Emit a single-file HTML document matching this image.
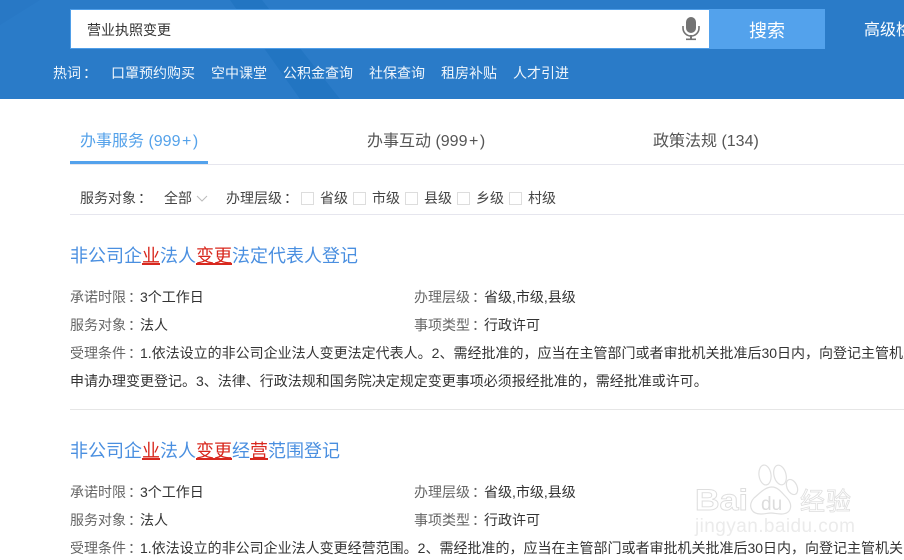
<!DOCTYPE html>
<html lang="zh"><head><meta charset="utf-8"><title>搜索</title>
<style>
html,body{margin:0;padding:0}
body{width:904px;height:560px;overflow:hidden;background:#fff;position:relative;font-family:"Liberation Sans","Noto Sans CJK SC",sans-serif;color:#333}
.t{position:absolute;white-space:nowrap;line-height:20px;font-size:14px}
.c{font-family:"Noto Sans CJK TC",sans-serif}
.k{font-family:"Noto Sans CJK TC",sans-serif;position:relative;left:2px}
.p{margin:0 1.500px}
.hd{position:absolute;left:0;top:0;width:904px;height:99px;background:#2a7bc8;overflow:hidden}
.ln{position:absolute;background:#e6e6ee;height:1px}
.w{color:#f0f6fc}
.h{font-size:18px;line-height:26px;color:#4a8fe0}
.h b{font-weight:400;color:#d8281e;position:relative;display:inline-block}
.h b::after{content:"";position:absolute;left:0;right:0;top:20px;height:2px;background:#d8281e}
.g{color:#666}
.cb{position:absolute;top:192px;width:11px;height:11px;border:1px solid #ddd;background:#fff}
.f{color:#444}
</style></head><body>
<div class="hd">
<svg width="904" height="99" style="position:absolute;left:0;top:0"><polygon points="230,0 262,0 340,99 300,99" fill="#2275c2"/><polygon points="0,0 40,0 0,25" fill="#2878c5"/></svg>
<div style="position:absolute;left:70px;top:9px;width:638px;height:38px;background:#fff;border:1px solid #4f9ee8"></div>
<div style="position:absolute;left:709px;top:9px;width:116px;height:40px;background:#53a2ec"></div>
<svg width="18" height="24" viewBox="0 0 18 24" style="position:absolute;left:682px;top:17px"><rect x="4" y="0" width="10" height="16" rx="5" fill="#737373"/><path d="M1 9v2a8 8 0 0 0 16 0V9" fill="none" stroke="#737373" stroke-width="1.6"/><rect x="8" y="18" width="2" height="4" fill="#737373"/><rect x="4" y="21.500" width="10" height="1.600" fill="#737373"/></svg>
<span class="t" style="left:87px;top:20px;color:#333">营业执照变更</span>
<span class="t" style="left:749px;top:20px;font-size:18px;color:#fff;line-height:22px">搜索</span>
<span class="t" style="left:864px;top:21px;font-size:16px;color:#fff">高级检索</span>
<span class="t w" style="left:53px;top:63px">热词<span class="k">：</span></span>
<span class="t w" style="left:111px;top:63px">口罩预约购买</span>
<span class="t w" style="left:211px;top:63px">空中课堂</span>
<span class="t w" style="left:283px;top:63px">公积金查询</span>
<span class="t w" style="left:369px;top:63px">社保查询</span>
<span class="t w" style="left:441px;top:63px">租房补贴</span>
<span class="t w" style="left:513px;top:63px">人才引进</span>
</div>

<span class="t" style="left:80px;top:132px;font-size:16px;color:#55a2ea">办事服务 (999<span class="p">+</span>)</span>
<span class="t" style="left:367px;top:132px;font-size:16px;color:#555">办事互动 (999<span class="p">+</span>)</span>
<span class="t" style="left:653px;top:132px;font-size:16px;color:#555">政策法规 (134)</span>
<div class="ln" style="left:70px;top:164px;width:834px"></div>
<div style="position:absolute;left:70px;top:161px;width:138px;height:3px;background:#53a2ec"></div>

<span class="t f" style="left:80px;top:188px">服务对象<span class="k">：</span></span>
<span class="t f" style="left:164px;top:188px">全部</span>
<svg width="12" height="7" style="position:absolute;left:196px;top:195px"><path d="M1 1l5 5 5-5" fill="none" stroke="#bbb"/></svg>
<span class="t f" style="left:226px;top:188px">办理层级<span class="k">：</span></span>
<div class="cb" style="left:301px"></div><span class="t f" style="left:320px;top:188px">省级</span>
<div class="cb" style="left:353px"></div><span class="t f" style="left:372px;top:188px">市级</span>
<div class="cb" style="left:405px"></div><span class="t f" style="left:424px;top:188px">县级</span>
<div class="cb" style="left:457px"></div><span class="t f" style="left:476px;top:188px">乡级</span>
<div class="cb" style="left:509px"></div><span class="t f" style="left:528px;top:188px">村级</span>
<div class="ln" style="left:70px;top:214px;width:834px"></div>

<div class="t h" style="left:70px;top:243px">非公司企<b>业</b>法人<b>变更</b>法定代表人登记</div>
<span class="t" style="left:70px;top:287px"><span class="g">承诺时限<span class="k">：</span></span>3个工作日</span>
<span class="t" style="left:414px;top:287px"><span class="g">办理层级<span class="k">：</span></span>省级,市级,县级</span>
<span class="t" style="left:70px;top:315px"><span class="g">服务对象<span class="k">：</span></span>法人</span>
<span class="t" style="left:414px;top:315px"><span class="g">事项类型<span class="k">：</span></span>行政许可</span>
<span class="t" style="left:70px;top:343px"><span class="g">受理条件<span class="k">：</span></span>1.依法设立的非公司企业法人变更法定代表人。2、需经批准的<span class="c">，</span>应当在主管部门或者审批机关批准后30日内<span class="c">，</span>向登记主管机关</span>
<span class="t" style="left:70px;top:371px">申请办理变更登记。3、法律、行政法规和国务院决定规定变更事项必须报经批准的<span class="c">，</span>需经批准或许可。</span>
<div class="ln" style="left:70px;top:409px;width:834px;background:#e6e6e6"></div>

<div class="t h" style="left:70px;top:438px">非公司企<b>业</b>法人<b>变更</b>经<b>营</b>范围登记</div>
<span class="t" style="left:70px;top:482px"><span class="g">承诺时限<span class="k">：</span></span>3个工作日</span>
<span class="t" style="left:414px;top:482px"><span class="g">办理层级<span class="k">：</span></span>省级,市级,县级</span>
<span class="t" style="left:70px;top:510px"><span class="g">服务对象<span class="k">：</span></span>法人</span>
<span class="t" style="left:414px;top:510px"><span class="g">事项类型<span class="k">：</span></span>行政许可</span>
<span class="t" style="left:70px;top:538px"><span class="g">受理条件<span class="k">：</span></span>1.依法设立的非公司企业法人变更经营范围。2、需经批准的<span class="c">，</span>应当在主管部门或者审批机关批准后30日内<span class="c">，</span>向登记主管机关</span>

<svg width="904" height="560" style="position:absolute;left:0;top:0">
<g fill="#fff" stroke="#e0e0e0" stroke-width="1.200">
<ellipse cx="765" cy="475" rx="6" ry="10" transform="rotate(-8 765 475)"/>
<ellipse cx="780" cy="475" rx="6" ry="10" transform="rotate(-15 780 475)"/>
<ellipse cx="792" cy="487" rx="5" ry="8" transform="rotate(-25 792 487)"/>
<path d="M772 487c6 0 10 6 15 11 6 6 5 16-6 16-4 0-7-1-10-1s-6 1-10 1c-11 0-13-10-7-16 6-5 11-11 18-11z"/>
</g>
<text x="695" y="510" font-family="Liberation Sans" font-size="30" font-weight="700" fill="#fff" stroke="#dedede" stroke-width=".9" textLength="53" lengthAdjust="spacingAndGlyphs">Bai</text>
<text x="761" y="510" font-family="Liberation Sans" font-size="19" fill="#dcdcdc">du</text>
<text x="800" y="510" font-family="Liberation Sans,Noto Sans CJK SC,sans-serif" font-size="25" fill="#fff" stroke="#dedede" stroke-width=".8" textLength="51">经验</text>
<text x="695" y="532" font-family="Liberation Sans" font-size="19" fill="#ebebeb" textLength="160">jingyan.baidu.com</text>
</svg>
</body></html>
